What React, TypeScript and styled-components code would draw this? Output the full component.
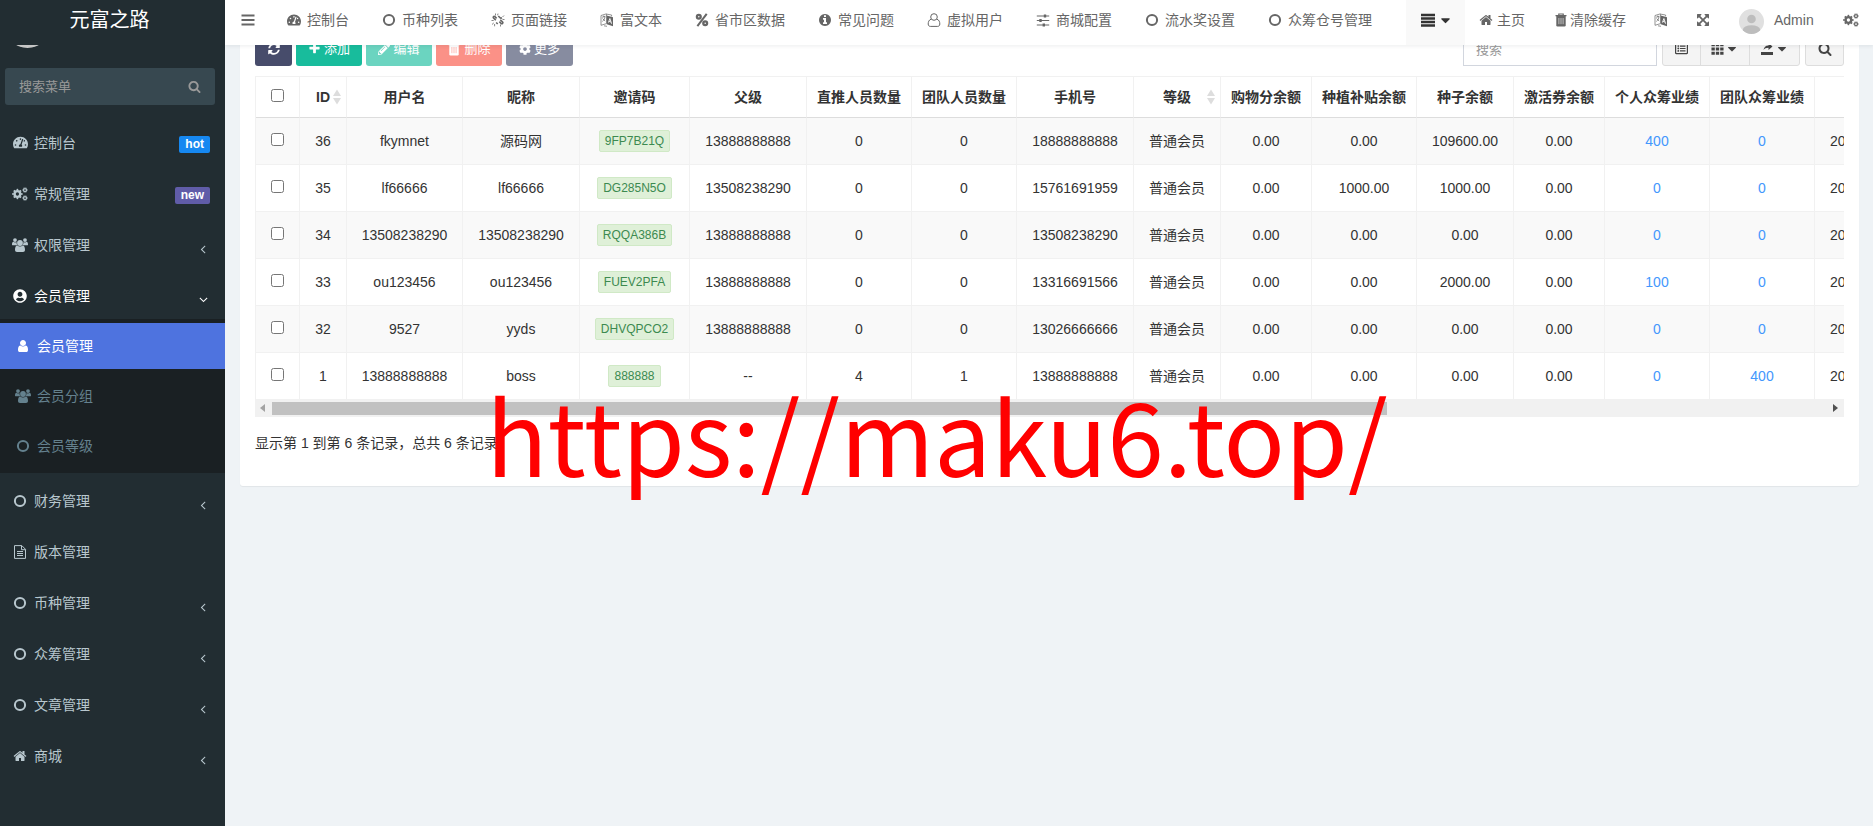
import React, { FC, ReactNode } from 'react';
import styled, { createGlobalStyle } from 'styled-components';
import { FaCog, FaPencilAlt, FaRegListAlt, FaSyncAlt, FaTachometerAlt, FaUserCircle } from 'react-icons/fa';

const GlobalStyle = createGlobalStyle`
  * {
    box-sizing: border-box;
  }
  body {
    margin: 0;
    background: #eff3f6;
    color: #333;
    font: 14px/20px 'Liberation Sans', 'Noto Sans CJK SC', sans-serif;
    overflow: hidden;
  }
`;

const paths = {
  home:
    'M1472 992v480q0 26-19 45t-45 19h-384v-384h-256v384h-384q-26 0-45-19t-19-45v-480q0-1 .5-3t.5-3l575-474 575 474q1 2 1 6zm223-69l-62 74q-8 9-21 11h-3q-13 0-21-7l-692-577-692 577q-12 8-24 7-13-2-21-11l-62-74q-8-10-7-23.5t11-21.5l719-599q32-26 76-26t76 26l244 204v-195q0-14 9-23t23-9h192q14 0 23 9t9 23v408l219 182q10 8 11 21.5t-7 23.5z',
  plus:
    'M1600 736v192q0 40-28 68t-68 28h-416v416q0 40-28 68t-68 28h-192q-40 0-68-28t-28-68v-416h-416q-40 0-68-28t-28-68v-192q0-40 28-68t68-28h416v-416q0-40 28-68t68-28h192q40 0 68 28t28 68v416h416q40 0 68 28t28 68z',
  info:
    'M1152 1376v-160q0-14-9-23t-23-9h-96v-512q0-14-9-23t-23-9h-320q-14 0-23 9t-9 23v160q0 14 9 23t23 9h96v320h-96q-14 0-23 9t-9 23v160q0 14 9 23t23 9h448q14 0 23-9t9-23zm-128-896v-160q0-14-9-23t-23-9h-192q-14 0-23 9t-9 23v160q0 14 9 23t23 9h192q14 0 23-9t9-23zm640 416q0 209-103 385.5t-279.5 279.5-385.5 103-385.5-103-279.5-279.5-103-385.5 103-385.5 279.5-279.5 385.5-103 385.5 103 279.5 279.5 103 385.5z',
  angle:
    'M1203 544q0 13-10 23l-393 393 393 393q10 10 10 23t-10 23l-50 50q-10 10-23 10t-23-10l-466-466q-10-10-10-23t10-23l466-466q10-10 23-10t23 10l50 50q10 10 10 23z',
  search:
    'M1216 832q0-185-131.5-316.5t-316.5-131.5-316.5 131.5-131.5 316.5 131.5 316.5 316.5 131.5 316.5-131.5 131.5-316.5zm512 832q0 52-38 90t-90 38q-54 0-90-38l-343-342q-179 124-399 124-143 0-273.5-55.5t-225-150-150-225-55.5-273.5 55.5-273.5 150-225 225-150 273.5-55.5 273.5 55.5 225 150 150 225 55.5 273.5q0 220-124 399l343 343q37 37 37 90z',
  user:
    'M1536 1399q0 109-62.5 187t-150.5 78h-854q-88 0-150.5-78t-62.5-187q0-85 8.5-160.5t31.5-152 58.5-131 94-89 134.5-34.5q131 128 313 128t313-128q76 0 134.5 34.5t94 89 58.5 131 31.5 152 8.5 160.5zm-256-887q0 159-112.5 271.5t-271.5 112.5-271.5-112.5-112.5-271.5 112.5-271.5 271.5-112.5 271.5 112.5 112.5 271.5z',
  caret:
    'M1408 704q0 26-19 45l-448 448q-19 19-45 19t-45-19l-448-448q-19-19-19-45t19-45 45-19h896q26 0 45 19t19 45z',
  arrows:
    'M1411 541l-355 355 355 355 144-144q29-31 70-14 39 17 39 59v448q0 26-19 45t-45 19h-448q-42 0-59-40-17-39 14-69l144-144-355-355-355 355 144 144q31 30 14 69-17 40-59 40h-448q-26 0-45-19t-19-45v-448q0-42 40-59 39-17 69 14l144 144 355-355-355-355-144 144q-19 19-45 19-12 0-24-5-40-17-40-59v-448q0-26 19-45t45-19h448q42 0 59 40 17 39-14 69l-144 144 355 355 355-355-144-144q-31-30-14-69 17-40 59-40h448q26 0 45 19t19 45v448q0 42-39 59-13 5-25 5-26 0-45-19z',
};

const Glyph: FC<{ name: keyof typeof paths; size?: number }> = ({ name, size = 14 }) => (
  <svg width={size} height={size} viewBox="0 0 1792 1792" fill="currentColor">
    <path d={paths[name]} />
  </svg>
);

const Draw: FC<{ children: ReactNode; size?: number; width?: number }> = ({ children, size = 14, width = 14 }) => (
  <svg width={(size * width) / 14} height={size} viewBox={`0 0 ${width} 14`} fill="none" stroke="currentColor">
    {children}
  </svg>
);

const CircleO = () => (
  <Draw>
    <circle cx="7" cy="7" r="5.1" strokeWidth="2" />
  </Draw>
);

const Language = () => (
  <Draw>
    <path d="M1 2.5 6.5.8v9.8L1 12.3z" strokeWidth=".7" />
    <path d="M2.2 4.2 5.4 3.3M3.8 2.6v1.2M2.4 8.4c1.5-1.2 2.3-2.6 2.6-4.6M2.6 5.6l2.6 2.4" strokeWidth=".8" />
    <path d="M6.8 2.6 13 4.3v9L6.8 11.2z" fill="currentColor" stroke="none" />
    <path d="m8.4 9.6 1.5-4.1 1.7 5.2M8.9 8.4l2 .6" stroke="#fff" strokeWidth=".9" />
    <path d="M7 1.2 11.6 2v1.4M4 12.8l3 .5" strokeWidth=".7" />
  </Draw>
);

const Percent = () => (
  <Draw>
    <circle cx="3.8" cy="3.8" r="1.9" strokeWidth="2.3" />
    <circle cx="10.2" cy="10.2" r="1.9" strokeWidth="2.3" />
    <path d="M11.700.800 2.400 13.200" strokeWidth="2" />
  </Draw>
);

const Unlink = () => (
  <Draw>
    <path
      d="M5.600 5.400 3.900 3.600C2.900 2.700 1.700 4 2.500 5l2.300 2.300M8.400 8.600l1.700 1.800c1 .9 2.400-.3 1.500-1.400L9.300 6.700M7.300 3l1.500 1.500c.6.6 1.500.7 2.200.3M6.700 11 5.200 9.500"
      strokeWidth="1.600"
    />
    <path d="M4.500.5v2M7 .6 6.600 2.300M.5 7.500h2.200M1 11.500l1.800-1.600M3.600 11v2.300M9.500 13.500v-2M11.500 4 13 2.500M11.500 6.500h2" strokeWidth=".8" />
  </Draw>
);

const UserO = () => (
  <Draw>
    <circle cx="7" cy="4" r="3.3" />
    <path d="M4 6.200C1.800 7 1.200 9 1.200 11c0 1.500.900 2.400 2.100 2.400h7.400c1.200 0 2.100-.900 2.100-2.400 0-2-.600-4-2.800-4.800" />
  </Draw>
);

const Sliders = () => (
  <Draw>
    <path d="M.8 3H13.200M.8 7.500H13.200M.8 12H13.200" strokeWidth="1.200" />
    <path d="M9 1.500v3M4.500 6v3M7.800 10.500v3" strokeWidth="2.400" />
  </Draw>
);

const Trash: FC<{ line?: string }> = ({ line = '#fff' }) => (
  <Draw>
    <path d="M4.800 2V1h4.400v1M1.500 2.700h11" strokeWidth="1.200" />
    <path d="M2.300 3h9.400v9.200q0 1.400-1.200 1.400h-7q-1.200 0-1.200-1.400z" fill="currentColor" stroke="none" />
    <path d="M4.900 5v6.200M7 5v6.200M9.100 5v6.200" stroke={line} strokeWidth=".6" />
  </Draw>
);

const FileText = () => (
  <Draw>
    <path d="M1.500.6h7.300l3.700 3.700v9.100h-11zM8.500.8v3.900h3.900M4 6.500h6M4 8.500h6M4 10.500h6" />
  </Draw>
);

const Bars = () => (
  <Draw>
    <path d="M.5 2.500h13M.5 7h13M.5 11.500h13" strokeWidth="1.900" />
  </Draw>
);

const Justify = () => (
  <Draw>
    <path d="M0 2h14M0 5.500h14M0 9h14M0 12.500h14" strokeWidth="2.500" />
  </Draw>
);

const Th = () => (
  <Draw size={13}>
    <path d="M.5 3h13M.5 7.500h13M.5 12h13" strokeWidth="3.200" strokeDasharray="3.600 1.100" />
  </Draw>
);

const Export = () => (
  <Draw>
    <path d="M3.500 8c.5-3 2-4.500 5-4.600V1l4 3.500-4 3.400V5.700C6 5.700 4.600 6.500 3.500 8z" fill="currentColor" stroke="none" />
    <path d="M1 11.500h12" strokeWidth="3" />
  </Draw>
);

const Cog: FC<{ x: number; y: number; r: number; teeth: number }> = ({ x, y, r, teeth }) => (
  <>
    <circle cx={x} cy={y} r={r * 0.6} strokeWidth={r * 0.5} />
    <circle
      cx={x}
      cy={y}
      r={r * 0.93}
      strokeWidth={r * 0.34}
      pathLength={teeth * 2}
      strokeDasharray="1 1"
      strokeDashoffset=".5"
    />
  </>
);

const Cogs = () => (
  <Draw width={16}>
    <Cog x={5.4} y={7} r={4.7} teeth={8} />
    <Cog x={13} y={3} r={2.5} teeth={6} />
    <Cog x={13} y={11} r={2.5} teeth={6} />
  </Draw>
);

const Group = () => (
  <Draw width={16}>
    <g fill="currentColor" stroke="none">
      <circle cx="3" cy="2.1" r="1.9" />
      <circle cx="13" cy="2.1" r="1.9" />
      <path d="M0 6.400c0-1.800.6-2.600 1.400-2.600 1 .8 2.200.8 3.200.2-.2 1.400.2 2.500 1 3.300H1.200C.5 7.300 0 7 0 6.400zM16 6.400c0-1.800-.6-2.600-1.400-2.600-1 .8-2.200.8-3.200.2.200 1.400-.2 2.500-1 3.300h4.400c.7 0 1.200-.3 1.200-.9z" />
      <circle cx="8" cy="5" r="2.900" />
      <path d="M3 11.800C3 9.300 3.700 7.400 5.300 7.400c1.600 1.400 3.800 1.400 5.400 0 1.600 0 2.300 1.900 2.300 4.400 0 1.400-.8 2.200-2 2.200H5c-1.200 0-2-.8-2-2.200z" />
    </g>
  </Draw>
);

const Page = styled.div`
  display: flex;
  width: 1873px;
  height: 826px;
  overflow: hidden;
`;

const Sidebar = styled.aside`
  flex: none;
  width: 225px;
  background: #222d32;
  color: #b8c7ce;
`;

const Logo = styled.div`
  height: 45px;
  padding: 0 6px 5px 0;
  width: 225px;
  display: flex;
  align-items: center;
  justify-content: center;
  font-size: 20px;
  color: #fff;
`;

const UserPanel = styled.div`
  height: 23px;
  padding-left: 5px;
  overflow: hidden;
`;

const UserPhoto = styled.div`
  width: 45px;
  height: 45px;
  margin-top: -42px;
  border-radius: 50%;
  background: #c6c6c6;
`;

const MenuSearch = styled.div`
  display: flex;
  justify-content: space-between;
  align-items: center;
  width: 210px;
  height: 37px;
  margin: 0 0 10px 5px;
  padding: 0 14px;
  border-radius: 3px;
  background: #374850;
  color: #999;
  font-size: 13px;
`;

const MenuRow = styled.div<{ $active?: boolean }>`
  display: flex;
  align-items: center;
  height: 51px;
  padding: 4px 15px 0 13px;
  color: ${({ $active }) => ($active ? '#fff' : '#b8c7ce')};
`;

const MenuIcon = styled.span`
  display: flex;
  flex: none;
  justify-content: center;
  width: 14px;
  margin-right: 7px;
  svg {
    flex: none;
  }
`;

const MenuArrow = styled.span<{ $open?: boolean }>`
  display: flex;
  margin: 9px 0 0 auto;
  transform: ${({ $open }) => ($open ? 'rotate(-90deg)' : 'none')};
`;

const Badge = styled.span<{ $color: string }>`
  margin-left: auto;
  padding: 0 6px;
  border-radius: 2px;
  background: ${({ $color }) => $color};
  color: #fff;
  font-size: 12px;
  font-weight: bold;
  line-height: 17px;
  margin-top: 3px;
`;

const SubMenu = styled.div`
  display: flow-root;
  padding-top: 4px;
  background: #1a2023;
`;

const SubRow = styled.div<{ $active?: boolean }>`
  display: flex;
  align-items: center;
  height: 46px;
  margin-bottom: 4px;
  padding-left: 16px;
  background: ${({ $active }) => ($active ? '#4e73df' : 'transparent')};
  color: ${({ $active }) => ($active ? '#fff' : '#64818e')};
`;

const Main = styled.main`
  flex: 1;
  min-width: 0;
`;

const Navbar = styled.header`
  position: relative;
  z-index: 1;
  display: flex;
  height: 45px;
  background: #fff;
  color: #666;
  box-shadow: 0 1px 4px rgba(0, 21, 41, 0.08);
`;

const Toggle = styled.div`
  display: flex;
  justify-content: center;
  width: 45px;
  padding-top: 13px;
`;

const NavItem = styled.div`
  display: flex;
  align-items: center;
  height: 40px;
  padding: 0 16px;
  white-space: nowrap;
`;

const NavIcon = styled.span`
  display: flex;
  justify-content: center;
  width: 16px;
  margin-right: 5px;
  svg {
    flex: none;
  }
`;

const NavRight = styled.div`
  display: flex;
  margin-left: auto;
`;

const NavMore = styled.div`
  display: flex;
  gap: 3px;
  width: 59px;
  padding: 13px 0 0 15px;
  background: #f9f9f9;
  color: #333;
`;

const NavLink = styled.div<{ $width: number; $gap?: number }>`
  display: flex;
  align-items: center;
  gap: ${({ $gap = 4 }) => $gap}px;
  width: ${({ $width }) => $width}px;
  height: 40px;
  padding-left: 14px;
  white-space: nowrap;
`;

const NavUser = styled(NavLink)`
  height: 43px;
  padding-left: 15px;
  span {
    margin-bottom: 3px;
  }
`;

const Card = styled.section`
  height: 456px;
  margin: -15px 14px 0 15px;
  padding: 1px 15px 0;
  border-radius: 3px;
  background: #fff;
  box-shadow: 0 1px 1px rgba(0, 0, 0, 0.06);
`;

const Toolbar = styled.div`
  display: flex;
  height: 35px;
  margin-bottom: 10px;
`;

const Button = styled.div<{ $color: string; $width: number }>`
  display: flex;
  align-items: center;
  justify-content: center;
  gap: 3px;
  width: ${({ $width }) => $width}px;
  margin-right: 4px;
  border-radius: 3px;
  background: ${({ $color }) => $color};
  color: #fff;
  font-size: 13px;
`;

const SearchInput = styled.div`
  width: 194px;
  margin: 0 5px 0 auto;
  padding: 8px 12px;
  border: 1px solid #d2d6de;
  color: #999;
  font-size: 13px;
`;

const ToolGroup = styled.div`
  display: flex;
  margin-right: 5px;
  border: 1px solid #ddd;
  border-radius: 3px;
  background: #f4f4f4;
  color: #444;

  &:last-child {
    margin-right: 0;
  }
`;

const ToolButton = styled.div<{ $width: number }>`
  display: flex;
  align-items: center;
  justify-content: center;
  gap: 1px;
  width: ${({ $width }) => $width}px;

  & + & {
    border-left: 1px solid #ddd;
  }
`;

const TableWrap = styled.div`
  overflow: hidden;
  height: 323px;
`;

const Table = styled.table`
  width: 1700px;
  table-layout: fixed;
  border-collapse: separate;
  border-spacing: 0;
  text-align: center;
  white-space: nowrap;
  border-left: 1px solid #f1f1f1;
`;

const HeadTh = styled.th`
  height: 42px;
  padding: 0;
  border-top: 1px solid #f1f1f1;
  border-right: 1px solid #f1f1f1;
  border-bottom: 1px solid #ddd;
`;

const HeadCell = styled.div`
  position: relative;
  line-height: 20px;
`;

const SortIcon = styled.svg`
  position: absolute;
  top: 2px;
  right: 4px;
`;

const Td = styled.td<{ $link?: boolean; $left?: boolean }>`
  height: 47px;
  padding: 0 ${({ $left }) => ($left ? '15px' : '0')};
  border-right: 1px solid #f1f1f1;
  border-bottom: 1px solid #f1f1f1;
  color: ${({ $link }) => ($link ? '#4397fd' : '#333')};
  text-align: ${({ $left }) => ($left ? 'left' : 'center')};
`;

const Row = styled.tr`
  &:nth-child(odd) {
    background: #f9f9f9;
  }
`;

const Check = styled.input`
  display: block;
  width: 13px;
  height: 13px;
  margin: 0 auto 4px;
`;

const Code = styled.span`
  display: inline-block;
  height: 22px;
  padding: 0 5px;
  border: 1px solid #d0e9c6;
  border-radius: 2px;
  background: #dff0d8;
  color: #3c8a50;
  font-size: 12px;
  line-height: 20px;
  vertical-align: middle;
`;

const ScrollTrack = styled.div`
  display: flex;
  align-items: center;
  justify-content: space-between;
  height: 18px;
  padding: 0 6px 0 5px;
  background: #f1f1f1;
`;

const ScrollThumb = styled.div`
  width: 1115px;
  height: 13px;
  margin: 0 auto 0 7px;
  background: #c1c1c1;
`;

const Summary = styled.div`
  margin-top: 16px;
`;

const Watermark = styled.div`
  position: absolute;
  z-index: 2;
  left: 486px;
  top: 383px;
  color: #f00;
  font: 101.500px/100px 'Noto Sans CJK SC', sans-serif;
  white-space: nowrap;
`;

interface MenuEntry {
  label: string;
  icon: ReactNode;
  badge?: [string, string];
  arrow?: boolean;
  active?: boolean;
  children?: MenuEntry[];
}

const menu: MenuEntry[] = [
  { label: '控制台', icon: <FaTachometerAlt size={15} />, badge: ['hot', '#1688f1'] },
  { label: '常规管理', icon: <Cogs />, badge: ['new', '#605ca8'] },
  { label: '权限管理', icon: <Group />, arrow: true },
  {
    label: '会员管理',
    icon: <FaUserCircle size={14} />,
    arrow: true,
    active: true,
    children: [
      { label: '会员管理', icon: <Glyph name="user" />, active: true },
      { label: '会员分组', icon: <Group /> },
      { label: '会员等级', icon: <CircleO /> },
    ],
  },
  { label: '财务管理', icon: <CircleO />, arrow: true },
  { label: '版本管理', icon: <FileText /> },
  { label: '币种管理', icon: <CircleO />, arrow: true },
  { label: '众筹管理', icon: <CircleO />, arrow: true },
  { label: '文章管理', icon: <CircleO />, arrow: true },
  { label: '商城', icon: <Glyph name="home" />, arrow: true },
];

const navs: [string, ReactNode][] = [
  ['控制台', <FaTachometerAlt size={14} />],
  ['币种列表', <CircleO />],
  ['页面链接', <Unlink />],
  ['富文本', <Language />],
  ['省市区数据', <Percent />],
  ['常见问题', <Glyph name="info" />],
  ['虚拟用户', <UserO />],
  ['商城配置', <Sliders />],
  ['流水奖设置', <CircleO />],
  ['众筹仓号管理', <CircleO />],
];

// first column holds the checkbox, last one is cut off by the scroll area
const columns: [string, number][] = [
  ['', 44],
  ['ID', 47],
  ['用户名', 116],
  ['昵称', 117],
  ['邀请码', 110],
  ['父级', 117],
  ['直推人员数量', 105],
  ['团队人员数量', 105],
  ['手机号', 117],
  ['等级', 87],
  ['购物分余额', 91],
  ['种植补贴余额', 105],
  ['种子余额', 97],
  ['激活券余额', 91],
  ['个人众筹业绩', 105],
  ['团队众筹业绩', 105],
  ['', 140],
];

const rows = [
  ['36', 'fkymnet', '源码网', '9FP7B21Q', '13888888888', '0', '0', '18888888888', '普通会员', '0.00', '0.00', '109600.00', '0.00', '400', '0', '20'],
  ['35', 'lf66666', 'lf66666', 'DG285N5O', '13508238290', '0', '0', '15761691959', '普通会员', '0.00', '1000.00', '1000.00', '0.00', '0', '0', '20'],
  ['34', '13508238290', '13508238290', 'RQQA386B', '13888888888', '0', '0', '13508238290', '普通会员', '0.00', '0.00', '0.00', '0.00', '0', '0', '20'],
  ['33', 'ou123456', 'ou123456', 'FUEV2PFA', '13888888888', '0', '0', '13316691566', '普通会员', '0.00', '0.00', '2000.00', '0.00', '100', '0', '20'],
  ['32', '9527', 'yyds', 'DHVQPCO2', '13888888888', '0', '0', '13026666666', '普通会员', '0.00', '0.00', '0.00', '0.00', '0', '0', '20'],
  ['1', '13888888888', 'boss', '888888', '--', '4', '1', '13888888888', '普通会员', '0.00', '0.00', '0.00', '0.00', '0', '400', '20'],
];

const SideMenu: FC = () => (
  <Sidebar>
    <Logo>元富之路</Logo>
    <UserPanel>
      <UserPhoto />
    </UserPanel>
    <MenuSearch>
      搜索菜单
      <Glyph name="search" size={13} />
    </MenuSearch>
    {menu.map((item) => (
      <div key={item.label}>
        <MenuRow $active={item.active}>
          <MenuIcon>{item.icon}</MenuIcon>
          {item.label}
          {item.badge && <Badge $color={item.badge[1]}>{item.badge[0]}</Badge>}
          {item.arrow && (
            <MenuArrow $open={item.active}>
              <Glyph name="angle" />
            </MenuArrow>
          )}
        </MenuRow>
        {item.children && (
          <SubMenu>
            {item.children.map((child) => (
              <SubRow key={child.label} $active={child.active}>
                <MenuIcon>{child.icon}</MenuIcon>
                {child.label}
              </SubRow>
            ))}
          </SubMenu>
        )}
      </div>
    ))}
  </Sidebar>
);

const TopNav: FC = () => (
  <Navbar>
    <Toggle>
      <Bars />
    </Toggle>
    {navs.map(([label, icon]) => (
      <NavItem key={label}>
        <NavIcon>{icon}</NavIcon>
        {label}
      </NavItem>
    ))}
    <NavRight>
      <NavMore>
        <Justify />
        <Glyph name="caret" size={15} />
      </NavMore>
      <NavLink $width={75}>
        <Glyph name="home" />
        主页
      </NavLink>
      <NavLink $width={100} $gap={2}>
        <Trash />
        清除缓存
      </NavLink>
      <NavLink $width={42}>
        <Language />
      </NavLink>
      <NavLink $width={42}>
        <Glyph name="arrows" />
      </NavLink>
      <NavUser $width={105} $gap={10}>
        <svg width="25" height="25" viewBox="0 0 25 25">
          <clipPath id="avatar">
            <circle cx="12.5" cy="12.5" r="12.5" />
          </clipPath>
          <g clipPath="url(#avatar)">
            <path d="M0 0h25v25H0z" fill="#e0e0e0" />
            <circle cx="12.5" cy="10" r="4.3" fill="#bdbdbd" />
            <ellipse cx="12.5" cy="21" rx="8.7" ry="4.8" fill="#bdbdbd" />
          </g>
        </svg>
        <span>Admin</span>
      </NavUser>
      <NavLink $width={44}>
        <Cogs />
      </NavLink>
    </NavRight>
  </Navbar>
);

const MemberTable: FC = () => (
  <TableWrap>
    <Table>
      <colgroup>
        {columns.map(([, width], i) => (
          <col key={i} style={{ width }} />
        ))}
      </colgroup>
      <thead>
        <tr>
          {columns.map(([title], i) => (
            <HeadTh key={i}>
              {i === 0 ? (
                <Check type="checkbox" />
              ) : (
                <HeadCell>
                  {title}
                  {(title === 'ID' || title === '等级') && (
                    <SortIcon width="10" height="16" viewBox="0 0 10 16" fill="#ddd">
                      <path d="M5 .5 9 7H1zM5 15.5 1 9h8z" />
                    </SortIcon>
                  )}
                </HeadCell>
              )}
            </HeadTh>
          ))}
        </tr>
      </thead>
      <tbody>
        {rows.map((row) => (
          <Row key={row[0]}>
            <Td>
              <Check type="checkbox" />
            </Td>
            {row.map((value, i) => (
              <Td key={i} $link={i === 13 || i === 14} $left={i === 15}>
                {i === 3 ? <Code>{value}</Code> : value}
              </Td>
            ))}
          </Row>
        ))}
      </tbody>
    </Table>
  </TableWrap>
);

const App: FC = () => (
  <Page>
    <GlobalStyle />
    <SideMenu />
    <Main>
      <TopNav />
      <Card>
        <Toolbar>
          <Button $color="#474c6b" $width={37}>
            <FaSyncAlt size={12} />
          </Button>
          <Button $color="#18bc9c" $width={66}>
            <Glyph name="plus" size={13} />
            添加
          </Button>
          <Button $color="#6bd4c0" $width={66}>
            <FaPencilAlt size={12} />
            编辑
          </Button>
          <Button $color="#fb9187" $width={66}>
            <Trash line="#fb9187" />
            删除
          </Button>
          <Button $color="#878ca0" $width={67}>
            <FaCog size={12} />
            更多
          </Button>
          <SearchInput>搜索</SearchInput>
          <ToolGroup>
            <ToolButton $width={37}>
              <FaRegListAlt size={13} />
            </ToolButton>
            <ToolButton $width={49}>
              <Th />
              <Glyph name="caret" />
            </ToolButton>
            <ToolButton $width={50}>
              <Export />
              <Glyph name="caret" />
            </ToolButton>
          </ToolGroup>
          <ToolGroup>
            <ToolButton $width={37}>
              <Glyph name="search" />
            </ToolButton>
          </ToolGroup>
        </Toolbar>
        <MemberTable />
        <ScrollTrack>
          <svg width="5" height="8" viewBox="0 0 5 8" fill="#a3a3a3">
            <path d="M5 0v8L0 4z" />
          </svg>
          <ScrollThumb />
          <svg width="5" height="8" viewBox="0 0 5 8" fill="#505050">
            <path d="M0 0v8l5-4z" />
          </svg>
        </ScrollTrack>
        <Summary>显示第 1 到第 6 条记录，总共 6 条记录</Summary>
      </Card>
    </Main>
    <Watermark>https://maku6.top/</Watermark>
  </Page>
);

export default App;
